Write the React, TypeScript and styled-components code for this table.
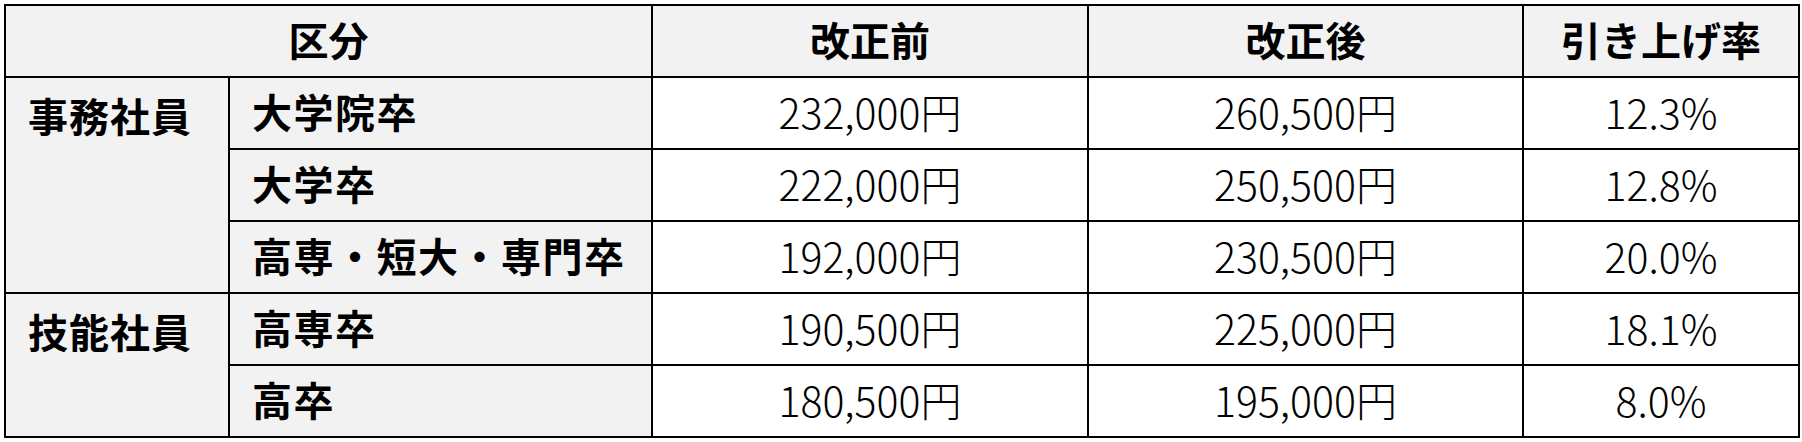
import React from 'react'
import styled, { createGlobalStyle } from 'styled-components'

const GlobalStyle = createGlobalStyle`
  body {
    margin: 0;
    background: #fff;
    font-family: "Noto Sans CJK JP", "Noto Sans", sans-serif;
    color: #000;
  }
`

const Page = styled.div`
  padding: 4px;
`

const Table = styled.table`
  border-collapse: collapse;
  table-layout: fixed;
  width: 1794px;
  font-size: 40px;
  line-height: 1;
`

const Row = styled.tr`
  height: 72px;
`

const HeadCell = styled.th`
  border: 2px solid #000;
  background: #f2f2f2;
  font-weight: 700;
  text-align: center;
  vertical-align: middle;
  padding: 0 0 4px;
`

const GroupCell = styled.td`
  border: 2px solid #000;
  background: #f2f2f2;
  font-weight: 700;
  letter-spacing: 1px;
  vertical-align: top;
  text-align: left;
  padding: 17px 0 0 22px;
`

const SubCell = styled.td`
  border: 2px solid #000;
  background: #f2f2f2;
  font-weight: 700;
  letter-spacing: 1.5px;
  text-align: left;
  vertical-align: middle;
  padding: 0 0 4px 22px;
`

const ValueCell = styled.td`
  border: 2px solid #000;
  background: #fff;
  font-size: 41px;
  font-weight: 300;
  text-align: center;
  vertical-align: middle;
  padding: 0 0 4px;
`

type Item = { name: string; before: string; after: string; rate: string }
type Group = { label: string; items: Item[] }

const groups: Group[] = [
  {
    label: '事務社員',
    items: [
      { name: '大学院卒', before: '232,000円', after: '260,500円', rate: '12.3%' },
      { name: '大学卒', before: '222,000円', after: '250,500円', rate: '12.8%' },
      { name: '高専・短大・専門卒', before: '192,000円', after: '230,500円', rate: '20.0%' },
    ],
  },
  {
    label: '技能社員',
    items: [
      { name: '高専卒', before: '190,500円', after: '225,000円', rate: '18.1%' },
      { name: '高卒', before: '180,500円', after: '195,000円', rate: '8.0%' },
    ],
  },
]

export default function App() {
  return (
    <>
      <GlobalStyle />
      <Page>
        <Table>
          <colgroup>
            <col style={{ width: 224 }} />
            <col style={{ width: 423 }} />
            <col style={{ width: 436 }} />
            <col style={{ width: 435 }} />
            <col style={{ width: 276 }} />
          </colgroup>
          <thead>
            <Row>
              <HeadCell colSpan={2}>区分</HeadCell>
              <HeadCell>改正前</HeadCell>
              <HeadCell>改正後</HeadCell>
              <HeadCell>引き上げ率</HeadCell>
            </Row>
          </thead>
          <tbody>
            {groups.map(group =>
              group.items.map((item, i) => (
                <Row key={group.label + item.name}>
                  {i === 0 && <GroupCell rowSpan={group.items.length}>{group.label}</GroupCell>}
                  <SubCell>{item.name}</SubCell>
                  <ValueCell>{item.before}</ValueCell>
                  <ValueCell>{item.after}</ValueCell>
                  <ValueCell>{item.rate}</ValueCell>
                </Row>
              ))
            )}
          </tbody>
        </Table>
      </Page>
    </>
  )
}
